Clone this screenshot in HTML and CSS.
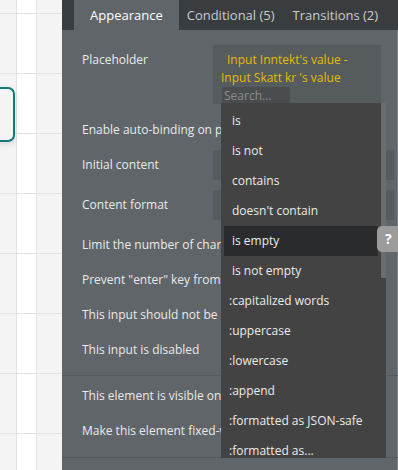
FILE: index.html
```html
<!DOCTYPE html>
<html>
<head>
<meta charset="utf-8">
<link rel="stylesheet" href="styles.css">
</head>
<body>
<div class="app">
  <div class="canvas">
    <div class="element"></div>
  </div>
  <div class="panel">
    <div class="tabs">
      <div class="tab active">Appearance</div>
      <div class="tab tab-cond">Conditional (5)</div>
      <div class="tab tab-trans">Transitions (2)</div>
    </div>
    <div class="props">
      <div class="row row-ph">
        <div class="label">Placeholder</div>
        <div class="ph-box"><span class="dyn">Input Inntekt's value - Input Skatt kr 's value</span></div>
      </div>
      <div class="row row-bind"><div class="label"><span class="clip">Enable auto-binding on parent element's thing</span></div></div>
      <div class="row row-init"><div class="label">Initial content</div><div class="field"></div></div>
      <div class="row row-fmt"><div class="label">Content format</div><div class="field"></div></div>
      <div class="row row-limit"><div class="label"><span class="clip">Limit the number of characters</span></div></div>
      <div class="row row-s5"><div class="label"><span class="clip">Prevent "enter" key from submitting</span></div></div>
      <div class="row row-s5"><div class="label"><span class="clip">This input should not be empty</span></div></div>
      <div class="row row-s5"><div class="label"><span class="clip">This input is disabled</span></div></div>
      <div class="sep sep-1"></div>
      <div class="row row-s5"><div class="label"><span class="clip">This element is visible on page load</span></div></div>
      <div class="row row-s5"><div class="label"><span class="clip">Make this element fixed-width</span></div></div>
      <div class="sep sep-2"></div>
    </div>
    <div class="search">Search...</div>
    <div class="dropdown">
      <div class="thumb"></div>
      <div class="list">
        <div class="item">is</div>
        <div class="item">is not</div>
        <div class="item">contains</div>
        <div class="item">doesn't contain</div>
        <div class="item selected">is empty</div>
        <div class="item">is not empty</div>
        <div class="item op">:capitalized words</div>
        <div class="item op">:uppercase</div>
        <div class="item op">:lowercase</div>
        <div class="item op">:append</div>
        <div class="item op">:formatted as JSON-safe</div>
        <div class="item op">:formatted as...</div>
      </div>
    </div>
    <div class="help">?</div>
  </div>
</div>
</body>
</html>
```

FILE: styles.css
```css
html, body {
  margin: 0;
  padding: 0;
}
body {
  width: 398px;
  height: 470px;
  overflow: hidden;
  font-family: "Open Sans", "Noto Sans", sans-serif;
}
.app {
  display: flex;
  width: 398px;
  height: 470px;
  overflow: hidden;
}
.canvas {
  position: relative;
  width: 62px;
  flex: none;
  height: 100%;
  background:
    linear-gradient(#e3e3e3, #e3e3e3) 16px 0 / 1px 100% no-repeat,
    linear-gradient(#e3e3e3, #e3e3e3) 36px 0 / 1px 100% no-repeat,
    repeating-linear-gradient(to bottom, transparent 0, transparent 13px, #e3e3e3 13px, #e3e3e3 14px, transparent 14px, transparent 60px),
    linear-gradient(#ffffff, #ffffff) 17px 0 / 19px 100% no-repeat,
    #f4f4f4;
}
.element {
  position: absolute;
  left: -30px;
  top: 87px;
  width: 41px;
  height: 51px;
  border: 2px solid #10797a;
  border-radius: 7px;
  background: #f4f4f4;
  box-shadow: 0 2px 6px rgba(0, 0, 0, 0.12);
}
.panel {
  position: relative;
  flex: 1;
  height: 100%;
  background: #5f6568;
  overflow: hidden;
  box-shadow: inset -1px 0 0 #7b8083;
}
.tabs {
  display: flex;
  height: 30px;
  background: #3a3d40;
  padding-left: 12px;
  font-size: 13px;
  line-height: 30px;
  color: #c9cccd;
  white-space: nowrap;
}
.tab.active {
  background: #5f6568;
  color: #ffffff;
  padding: 0 16px;
}
.tab-cond { margin-left: 8px; }
.tab-trans { margin-left: 18px; }
.props {
  display: flex;
  flex-direction: column;
  padding-left: 20px;
  font-size: 12px;
  color: #eaeaea;
}
.row {
  display: flex;
  align-items: center;
  height: 30px;
  flex: none;
  white-space: nowrap;
}
.label {
  width: 131px;
  flex: none;
  line-height: 30px;
}
.clip {
  display: block;
  width: 139px;
  overflow: hidden;
}
.row-ph {
  margin-top: 15px;
  height: 59px;
  align-items: flex-start;
}
.row-ph .label {
  line-height: 18px;
  padding-top: 6px;
}
.ph-box {
  box-sizing: border-box;
  width: 168px;
  height: 59px;
  background: #565b5e;
  padding: 6px 20px 0 8px;
  white-space: normal;
  font-size: 12px;
  line-height: 18px;
  text-indent: 6px;
  color: #e4be00;
}
.row-bind { margin-top: 11px; }
.row-init { margin-top: 5px; }
.row-fmt { margin-top: 10px; }
.row-limit { margin-top: 10px; }
.row-s5 { margin-top: 5px; }
.field {
  width: 181px;
  height: 30px;
  background: #565b5e;
}
.sep {
  height: 1px;
  background: #565a5d;
  margin-left: -20px;
  flex: none;
}
.sep-1 { margin-top: 10px; }
.sep-2 { margin-top: 11px; }
.search {
  position: absolute;
  left: 160px;
  top: 87px;
  width: 68px;
  height: 17px;
  box-sizing: border-box;
  padding-left: 2px;
  background: #4a4d50;
  border-radius: 2px 2px 0 0;
  font-size: 12px;
  line-height: 17px;
  color: #8c8c8c;
}
.dropdown {
  position: absolute;
  left: 159px;
  top: 103px;
  width: 165px;
  height: 355px;
  background: #434343;
  overflow: hidden;
}
.thumb {
  position: absolute;
  right: 0;
  top: 0;
  width: 5px;
  height: 175px;
  background: #6c6c6c;
}
.list {
  display: flex;
  flex-direction: column;
  padding-top: 3px;
}
.item {
  box-sizing: border-box;
  height: 30px;
  flex: none;
  width: 154px;
  margin-left: 3px;
  padding-left: 8px;
  font-size: 12px;
  line-height: 30px;
  color: #ebebeb;
  white-space: nowrap;
}
.item.op { padding-left: 5px; }
.item.selected { background: #2a2b2d; }
.help {
  position: absolute;
  left: 315px;
  top: 226px;
  width: 26px;
  height: 26px;
  box-sizing: border-box;
  padding-left: 8px;
  background: #9b9b9b;
  border-radius: 5px 0 0 5px;
  color: #ffffff;
  font-weight: 700;
  font-size: 14px;
  line-height: 26px;
}
```
